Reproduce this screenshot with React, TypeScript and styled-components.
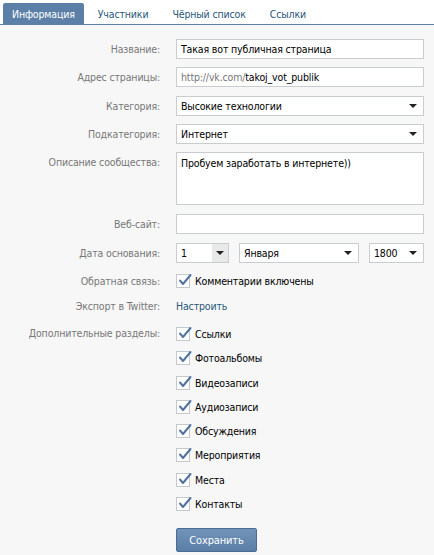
import React from "react";
import styled, { createGlobalStyle } from "styled-components";

const Global = createGlobalStyle`
  html, body { margin: 0; padding: 0; background: #f7f7f7; }
  body { font-family: "DejaVu Sans Condensed", "Liberation Sans", Arial, sans-serif; font-size: 10.5px; letter-spacing: -0.15px; color: #000; }
  * { box-sizing: border-box; }
`;

const Page = styled.div`
  width: 434px;
  height: 555px;
  background: #f7f7f7;
  overflow: hidden;
`;

const TabBar = styled.div`
  display: flex;
  align-items: flex-end;
  height: 25px;
  padding: 3px 0 0 3px;
  background: #ffffff;
  border-bottom: 1px solid #5b7fa6;
`;

const Tab = styled.div<{ $active?: boolean }>`
  height: 21px;
  padding: 0 ${(p) => (p.$active ? "9px" : "12px")};
  margin-right: ${(p) => (p.$active ? "2px" : "0")};
  display: flex;
  align-items: center;
  border-radius: 2px 2px 0 0;
  background: ${(p) => (p.$active ? "#5b7fa6" : "transparent")};
  color: ${(p) => (p.$active ? "#ffffff" : "#2b587a")};
`;

const Form = styled.div`
  display: flex;
  flex-direction: column;
  padding-top: 14px;
`;

const Row = styled.div<{ $mt?: number; $top?: boolean }>`
  display: grid;
  grid-template-columns: 160px 248px;
  column-gap: 16px;
  align-items: ${(p) => (p.$top ? "start" : "center")};
  margin-top: ${(p) => p.$mt ?? 0}px;
`;

const Label = styled.div<{ $pt?: number }>`
  text-align: right;
  color: #777777;
  white-space: nowrap;
  padding-top: ${(p) => p.$pt ?? 0}px;
`;

const Field = styled.div`
  height: 20px;
  border: 1px solid #c9cdd2;
  background: #ffffff;
  display: flex;
  align-items: center;
  padding: 0 4px;
  white-space: nowrap;
`;

const Muted = styled.span`
  color: #777777;
`;

const TextArea = styled.div`
  height: 53px;
  border: 1px solid #c9cdd2;
  background: #ffffff;
  padding: 4px 4px;
`;

const SelectBox = styled.div<{ $w?: number }>`
  height: 20px;
  width: ${(p) => (p.$w ? `${p.$w}px` : "100%")};
  border: 1px solid #c9cdd2;
  background: #ffffff;
  display: flex;
  align-items: center;
  padding-left: 4px;
`;

const SelectText = styled.div`
  flex: 1;
`;

const Arrow = styled.div<{ $shaded?: boolean }>`
  width: 16px;
  height: 100%;
  display: flex;
  align-items: center;
  justify-content: center;
  margin-right: ${(p) => (p.$shaded ? "0" : "2px")};
  background: ${(p) => (p.$shaded ? "#e9e9e9" : "transparent")};
  &::after {
    content: "";
    border-left: 4px solid transparent;
    border-right: 4px solid transparent;
    border-top: 4px solid #222222;
  }
`;

const DateGroup = styled.div`
  display: flex;
  gap: 10px;
`;

const CheckRow = styled.div`
  display: flex;
  align-items: center;
  gap: 5px;
  height: 16px;
`;

const Box = styled.div`
  position: relative;
  width: 14px;
  height: 14px;
  border: 1px solid #c5c9ce;
  background: #ffffff;
  flex-shrink: 0;
`;

const Tick = styled.svg`
  position: absolute;
  left: 1px;
  top: -2px;
`;

const Link = styled.span`
  color: #2b587a;
`;

const List = styled.div`
  display: flex;
  flex-direction: column;
  gap: 8.3px;
`;

const Button = styled.div`
  width: 81px;
  height: 24px;
  display: flex;
  align-items: center;
  justify-content: center;
  color: #ffffff;
  font-size: 11px;
  border: 1px solid #4a6c93;
  border-radius: 2px;
  background: linear-gradient(#7293b9, #5a7ea6);
`;

const Check = ({ children }: { children: React.ReactNode }) => (
  <CheckRow>
    <Box>
      <Tick width="14" height="14" viewBox="0 0 14 14">
        <path d="M2 7.5 L5 11 L12.5 2" fill="none" stroke="#4f74a1" strokeWidth="2" strokeLinecap="round" strokeLinejoin="round" />
      </Tick>
    </Box>
    <span>{children}</span>
  </CheckRow>
);

const sections = [
  "Ссылки",
  "Фотоальбомы",
  "Видеозаписи",
  "Аудиозаписи",
  "Обсуждения",
  "Мероприятия",
  "Места",
  "Контакты",
];

export default function App() {
  return (
    <Page>
      <Global />
      <TabBar>
        <Tab $active>Информация</Tab>
        <Tab>Участники</Tab>
        <Tab>Чёрный список</Tab>
        <Tab>Ссылки</Tab>
      </TabBar>
      <Form>
        <Row>
          <Label>Название:</Label>
          <Field>Такая вот публичная страница</Field>
        </Row>
        <Row $mt={8}>
          <Label>Адрес страницы:</Label>
          <Field>
            <Muted>http://vk.com/</Muted>takoj_vot_publik
          </Field>
        </Row>
        <Row $mt={9}>
          <Label>Категория:</Label>
          <SelectBox>
            <SelectText>Высокие технологии</SelectText>
            <Arrow />
          </SelectBox>
        </Row>
        <Row $mt={8}>
          <Label>Подкатегория:</Label>
          <SelectBox>
            <SelectText>Интернет</SelectText>
            <Arrow />
          </SelectBox>
        </Row>
        <Row $mt={8} $top>
          <Label $pt={4}>Описание сообщества:</Label>
          <TextArea>Пробуем заработать в интернете))</TextArea>
        </Row>
        <Row $mt={9}>
          <Label>Веб-сайт:</Label>
          <Field />
        </Row>
        <Row $mt={9}>
          <Label>Дата основания:</Label>
          <DateGroup>
            <SelectBox $w={53}>
              <SelectText>1</SelectText>
              <Arrow $shaded />
            </SelectBox>
            <SelectBox $w={120}>
              <SelectText>Января</SelectText>
              <Arrow />
            </SelectBox>
            <SelectBox $w={55}>
              <SelectText>1800</SelectText>
              <Arrow />
            </SelectBox>
          </DateGroup>
        </Row>
        <Row $mt={10}>
          <Label>Обратная связь:</Label>
          <Check>Комментарии включены</Check>
        </Row>
        <Row $mt={11}>
          <Label>Экспорт в Twitter:</Label>
          <Link>Настроить</Link>
        </Row>
        <Row $mt={14} $top>
          <Label $pt={1}>Дополнительные разделы:</Label>
          <List>
            {sections.map((s) => (
              <Check key={s}>{s}</Check>
            ))}
          </List>
        </Row>
        <Row $mt={16}>
          <div />
          <Button>Сохранить</Button>
        </Row>
      </Form>
    </Page>
  );
}
